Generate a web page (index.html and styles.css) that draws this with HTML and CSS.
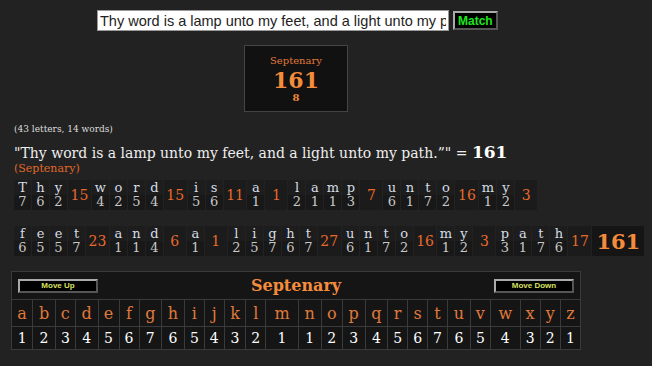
FILE: index.html
```html
<!DOCTYPE html>
<html lang="en">
<head>
    <meta charset="UTF-8">
    <title>Gematria - Septenary</title>
    <link rel="stylesheet" href="styles.css">
</head>
<body>
    <div class="search">
        <input class="phrase-input" type="text" value="Thy word is a lamp unto my feet, and a light unto my path">
        <button class="match">Match</button>
    </div>

    <div class="result">
        <div class="result-name">Septenary</div>
        <div class="result-value">161</div>
        <div class="result-digit">8</div>
    </div>

    <div class="counts">(43 letters, 14 words)</div>
    <div class="phrase">"Thy word is a lamp unto my feet, and a light unto my path.”" = <b>161</b></div>
    <div class="cipher-name">(Septenary)</div>

    <!-- breakdown by word -->
    <div class="breakdown">
        <div class="letter"><span>T</span><span>7</span></div>
        <div class="letter"><span>h</span><span>6</span></div>
        <div class="letter"><span>y</span><span>2</span></div>
        <div class="word-sum">15</div>
        <div class="letter"><span>w</span><span>4</span></div>
        <div class="letter"><span>o</span><span>2</span></div>
        <div class="letter"><span>r</span><span>5</span></div>
        <div class="letter"><span>d</span><span>4</span></div>
        <div class="word-sum">15</div>
        <div class="letter"><span>i</span><span>5</span></div>
        <div class="letter"><span>s</span><span>6</span></div>
        <div class="word-sum">11</div>
        <div class="letter"><span>a</span><span>1</span></div>
        <div class="word-sum">1</div>
        <div class="letter"><span>l</span><span>2</span></div>
        <div class="letter"><span>a</span><span>1</span></div>
        <div class="letter"><span>m</span><span>1</span></div>
        <div class="letter"><span>p</span><span>3</span></div>
        <div class="word-sum">7</div>
        <div class="letter"><span>u</span><span>6</span></div>
        <div class="letter"><span>n</span><span>1</span></div>
        <div class="letter"><span>t</span><span>7</span></div>
        <div class="letter"><span>o</span><span>2</span></div>
        <div class="word-sum">16</div>
        <div class="letter"><span>m</span><span>1</span></div>
        <div class="letter"><span>y</span><span>2</span></div>
        <div class="word-sum">3</div>
    </div>
    <div class="breakdown">
        <div class="letter"><span>f</span><span>6</span></div>
        <div class="letter"><span>e</span><span>5</span></div>
        <div class="letter"><span>e</span><span>5</span></div>
        <div class="letter"><span>t</span><span>7</span></div>
        <div class="word-sum">23</div>
        <div class="letter"><span>a</span><span>1</span></div>
        <div class="letter"><span>n</span><span>1</span></div>
        <div class="letter"><span>d</span><span>4</span></div>
        <div class="word-sum">6</div>
        <div class="letter"><span>a</span><span>1</span></div>
        <div class="word-sum">1</div>
        <div class="letter"><span>l</span><span>2</span></div>
        <div class="letter"><span>i</span><span>5</span></div>
        <div class="letter"><span>g</span><span>7</span></div>
        <div class="letter"><span>h</span><span>6</span></div>
        <div class="letter"><span>t</span><span>7</span></div>
        <div class="word-sum">27</div>
        <div class="letter"><span>u</span><span>6</span></div>
        <div class="letter"><span>n</span><span>1</span></div>
        <div class="letter"><span>t</span><span>7</span></div>
        <div class="letter"><span>o</span><span>2</span></div>
        <div class="word-sum">16</div>
        <div class="letter"><span>m</span><span>1</span></div>
        <div class="letter"><span>y</span><span>2</span></div>
        <div class="word-sum">3</div>
        <div class="letter"><span>p</span><span>3</span></div>
        <div class="letter"><span>a</span><span>1</span></div>
        <div class="letter"><span>t</span><span>7</span></div>
        <div class="letter"><span>h</span><span>6</span></div>
        <div class="word-sum">17</div>
        <div class="total">161</div>
    </div>

    <!-- cipher chart -->
    <table class="chart">
        <tr class="chart-head">
            <td colspan="26">
                <div class="chart-bar">
                    <button class="move">Move Up</button>
                    <span class="chart-title">Septenary</span>
                    <button class="move">Move Down</button>
                </div>
            </td>
        </tr>
        <tr class="chart-letters">
            <td>a</td><td>b</td><td>c</td><td>d</td><td>e</td><td>f</td><td>g</td><td>h</td><td>i</td><td>j</td><td>k</td><td>l</td><td>m</td>
            <td>n</td><td>o</td><td>p</td><td>q</td><td>r</td><td>s</td><td>t</td><td>u</td><td>v</td><td>w</td><td>x</td><td>y</td><td>z</td>
        </tr>
        <tr class="chart-values">
            <td>1</td><td>2</td><td>3</td><td>4</td><td>5</td><td>6</td><td>7</td><td>6</td><td>5</td><td>4</td><td>3</td><td>2</td><td>1</td>
            <td>1</td><td>2</td><td>3</td><td>4</td><td>5</td><td>6</td><td>7</td><td>6</td><td>5</td><td>4</td><td>3</td><td>2</td><td>1</td>
        </tr>
    </table>
</body>
</html>
```

FILE: styles.css
```css
*{
    margin: 0;
    padding: 0;
    box-sizing: border-box;
}

body{
    background-color: #222;
    color: #ddd;
    font-family: "DejaVu Serif", serif;
}

.search{
    display: flex;
    align-items: center;
    gap: 4px;
    padding-top: 10px;
    padding-left: 97px;
}
.phrase-input{
    width: 352px;
    height: 21px;
    padding: 0 2px;
    border: 1px solid #999;
    background: #fff;
    color: #222;
    font-family: "Liberation Sans", Arial, sans-serif;
    font-size: 14.5px;
}
.match{
    height: 19px;
    padding: 0 3px;
    background: #000;
    color: #1ee61e;
    border: 2px outset #aaa;
    font-family: "Liberation Sans", Arial, sans-serif;
    font-weight: bold;
    font-size: 12px;
}

.result{
    width: 104px;
    height: 67px;
    margin: 14px 0 0 244px;
    padding-top: 10px;
    background: #111;
    border: 1px solid #444;
    text-align: center;
    color: #f58c3c;
    line-height: 1;
}
.result-name{
    font-size: 10px;
    color: #e07a3a;
}
.result-value{
    font-size: 22px;
    font-weight: bold;
    margin-top: 3px;
}
.result-digit{
    font-size: 10px;
    font-weight: bold;
    margin-top: 2px;
}

.counts{
    margin: 12px 0 0 14px;
    font-size: 9px;
    color: #ddd;
}
.phrase{
    margin: 9px 0 0 14px;
    font-size: 14px;
    color: #eee;
    line-height: 18px;
}
.phrase b{
    font-size: 17px;
    color: #fff;
}
.cipher-name{
    margin-left: 14px;
    font-size: 11px;
    color: #e0682a;
    line-height: 13px;
}

.breakdown{
    display: flex;
    gap: 1px;
    margin: 5px 0 0 14px;
    align-items: stretch;
}
.breakdown + .breakdown{
    margin-top: 16px;
}
.letter{
    width: 17px;
    display: flex;
    flex-direction: column;
    text-align: center;
    font-size: 13px;
    line-height: 14px;
}
.letter span:first-child{
    background: #1d1d1d;
    color: #d6dde6;
    height: 15px;
    padding-top: 1px;
}
.letter span:last-child{
    background: #181818;
    color: #c8c8c8;
    height: 15px;
}
.word-sum{
    min-width: 22px;
    padding: 0 2.5px;
    background: #1b1b1b;
    color: #e8692a;
    font-size: 14px;
    display: flex;
    align-items: center;
    justify-content: center;
}
.total{
    width: 52px;
    justify-content: center;
    background: #151515;
    color: #f58c3c;
    font-size: 21px;
    font-weight: bold;
    display: flex;
    align-items: center;
}

.chart{
    margin: 15px 0 0 11px;
    width: 570px;
    border-collapse: collapse;
    background: #151515;
}
.chart td{
    border: 1px solid #3a3a3a;
    text-align: center;
}
.chart-bar{
    display: flex;
    justify-content: space-between;
    align-items: center;
    height: 27px;
    padding: 0 6px;
}
.move{
    width: 80px;
    height: 14px;
    background: #000;
    color: #d8e060;
    border: 2px outset #aaa;
    font-family: "Liberation Sans", Arial, sans-serif;
    font-weight: bold;
    font-size: 8px;
}
.chart-title{
    font-size: 16px;
    font-weight: bold;
    color: #f58c3c;
}
.chart-letters td{
    height: 27px;
    font-size: 16px;
    color: #e07a3a;
}
.chart-values td{
    height: 23px;
    font-size: 14px;
    color: #fff;
}
```
